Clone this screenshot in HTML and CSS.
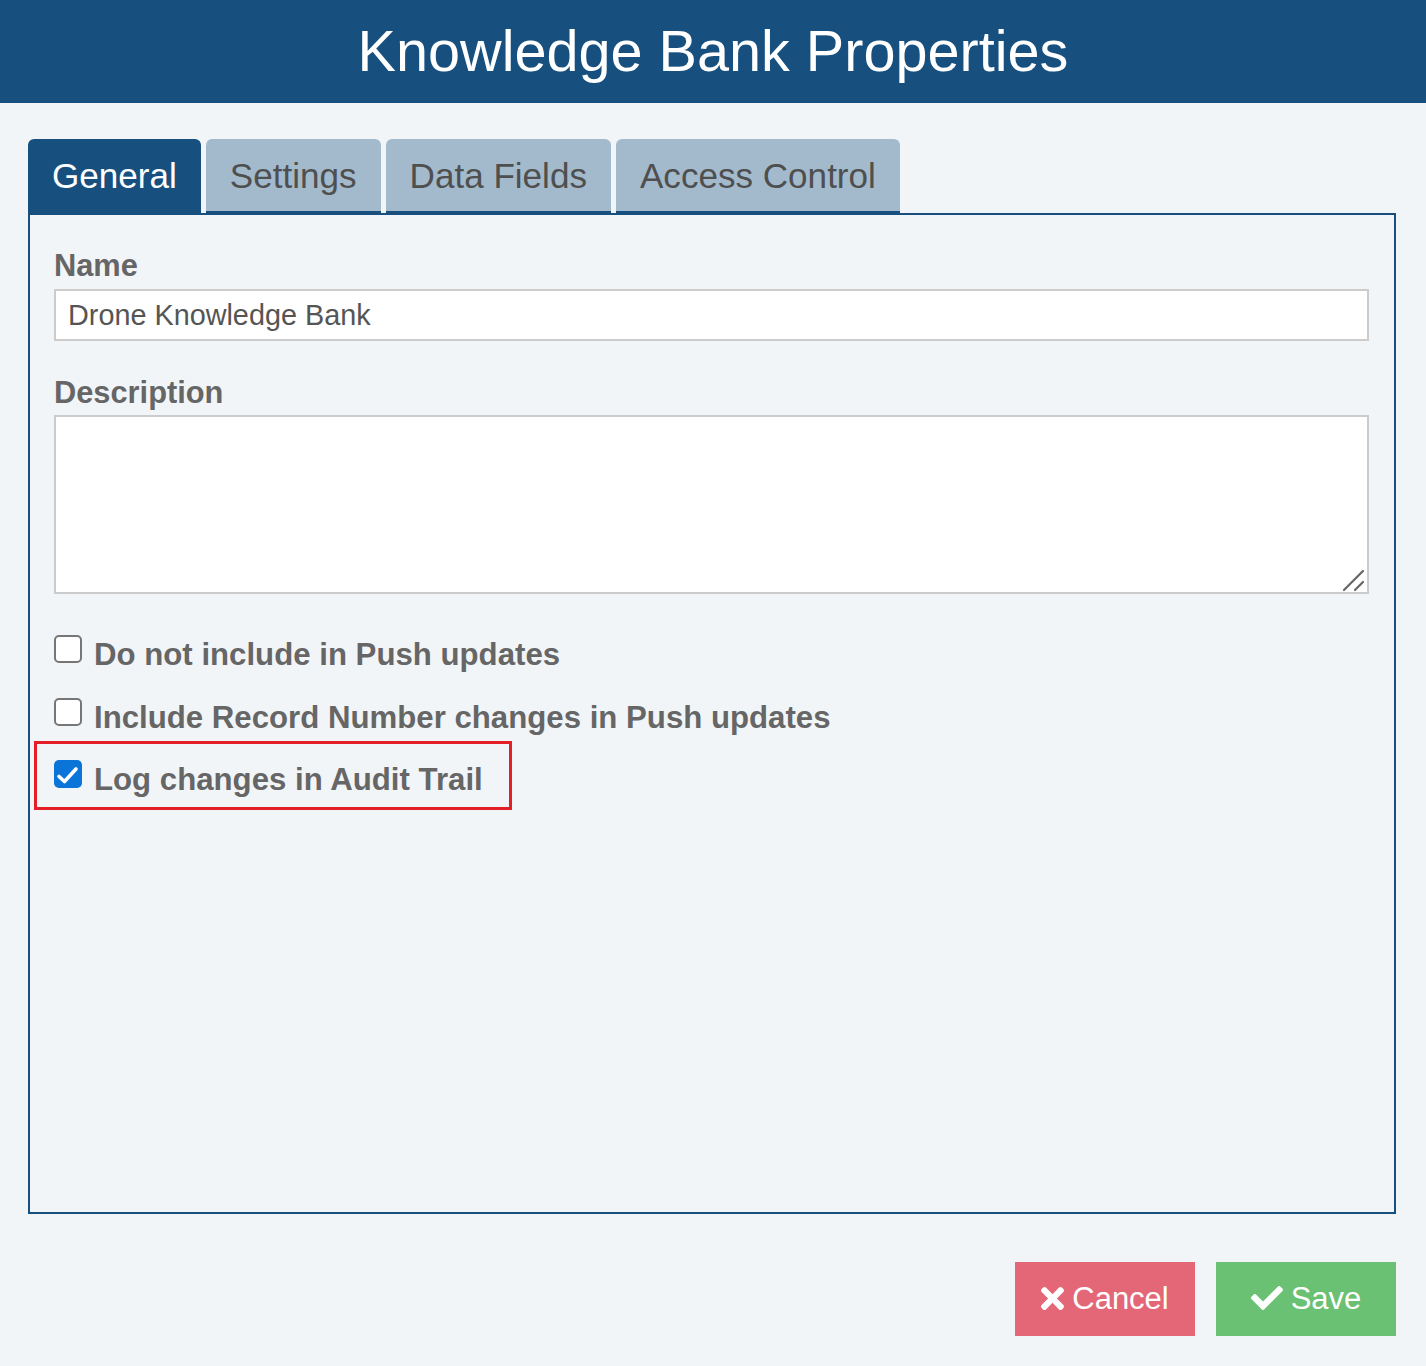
FILE: index.html
```html
<!DOCTYPE html>
<html lang="en">
<head>
<meta charset="utf-8">
<title>Knowledge Bank Properties</title>
<link rel="stylesheet" href="styles.css">
</head>
<body>
<header class="header">
  <h1 class="title">Knowledge Bank Properties</h1>
</header>
<main class="main">
  <nav class="tabs">
    <div class="tab tab-active">General</div>
    <div class="tab">Settings</div>
    <div class="tab">Data Fields</div>
    <div class="tab">Access Control</div>
  </nav>
  <section class="panel">
    <label class="field-label" for="name">Name</label>
    <input class="text-input" id="name" type="text" value="Drone Knowledge Bank">
    <label class="field-label field-label-desc" for="desc">Description</label>
    <div class="area-wrap">
      <textarea class="text-area" id="desc"></textarea>
      <svg class="grip" viewBox="0 0 24 24" aria-hidden="true">
        <path d="M2 22 L21 3 M13 22 L21 14" stroke="#666" stroke-width="2.2" stroke-linecap="round" fill="none"/>
      </svg>
    </div>
    <div class="check-row check-first">
      <span class="box" role="checkbox" aria-checked="false"></span>
      <span class="check-text">Do not include in Push updates</span>
    </div>
    <div class="check-row check-second">
      <span class="box" role="checkbox" aria-checked="false"></span>
      <span class="check-text">Include Record Number changes in Push updates</span>
    </div>
    <div class="highlight">
      <div class="check-row">
        <span class="box box-checked" role="checkbox" aria-checked="true">
          <svg class="tick" viewBox="0 0 28 28" aria-hidden="true"><path d="M5 16.5 L10.5 21.5 L22 9" stroke="#fff" stroke-width="3.6" stroke-linecap="round" stroke-linejoin="round" fill="none"/></svg>
        </span>
        <span class="check-text">Log changes in Audit Trail</span>
      </div>
    </div>
  </section>
  <div class="actions">
    <button class="btn btn-cancel" type="button">
      <svg class="icon-times" viewBox="0 80 352 352" aria-hidden="true"><path fill="#fff" d="M242.72 256l100.07-100.07c12.28-12.28 12.28-32.19 0-44.48l-22.24-22.24c-12.28-12.28-32.19-12.28-44.48 0L176 189.28 75.930 89.21c-12.28-12.28-32.19-12.28-44.48 0L9.21 111.45c-12.28 12.28-12.280 32.19 0 44.48L109.28 256 9.21 356.07c-12.28 12.28-12.28 32.19 0 44.48l22.24 22.24c12.28 12.28 32.2 12.28 44.480 0L176 322.72l100.07 100.07c12.28 12.28 32.2 12.28 44.48 0l22.24-22.24c12.28-12.28 12.28-32.19 0-44.48L242.72 256z"/></svg>
      <span>Cancel</span>
    </button>
    <button class="btn btn-save" type="button">
      <svg class="icon-check" viewBox="0 65 512 382" aria-hidden="true"><path fill="#fff" d="M173.898 439.404l-166.4-166.4c-9.997-9.997-9.997-26.206 0-36.204l36.203-36.204c9.997-9.998 26.207-9.998 36.204 0L192 312.69 432.095 72.596c9.997-9.997 26.207-9.997 36.204 0l36.203 36.204c9.997 9.997 9.997 26.206 0 36.204l-294.4 294.401c-9.998 9.997-26.207 9.997-36.204-.001z"/></svg>
      <span>Save</span>
    </button>
  </div>
</main>
</body>
</html>
```

FILE: styles.css
```css
* {
  box-sizing: border-box;
}

html, body {
  margin: 0;
  padding: 0;
}

body {
  background: #f2f5f8;
  font-family: "Liberation Sans", Arial, sans-serif;
  width: 1426px;
  min-height: 1366px;
}

.header {
  background: #17507f;
  height: 103px;
  display: flex;
  align-items: center;
  justify-content: center;
}

.title {
  margin: 0;
  color: #ffffff;
  font-size: 57.6px;
  font-weight: normal;
  line-height: 103px;
}

.main {
  padding: 36px 30px 0 28px;
}

.tabs {
  display: flex;
  gap: 5px;
  height: 74px;
}

.tab {
  height: 74px;
  padding: 0 24px;
  font-size: 35.1px;
  color: #4f4f4f;
  background: #a3bacd;
  border-radius: 6px 6px 0 0;
  border-bottom: 2px solid #17507f;
  line-height: 74px;
  white-space: nowrap;
}

.tab-active {
  background: #17507f;
  color: #ffffff;
  border-bottom-color: #17507f;
}

.panel {
  width: 1368px;
  height: 1001px;
  border: 2px solid #17507f;
  padding: 33px 25px 0 24px;
  display: flex;
  flex-direction: column;
  align-items: flex-start;
}

.field-label {
  display: block;
  font-size: 30.8px;
  font-weight: bold;
  color: #666666;
  line-height: 36px;
}

.field-label-desc {
  margin-top: 34px;
}

.text-input {
  display: block;
  width: 100%;
  height: 52px;
  margin-top: 5px;
  border: 2px solid #cccccc;
  background: #ffffff;
  padding: 0 12px;
  font-family: "Liberation Sans", Arial, sans-serif;
  font-size: 28.8px;
  color: #555555;
  outline: none;
}

.area-wrap {
  position: relative;
  width: 100%;
  height: 179px;
  margin-top: 4px;
}

.text-area {
  display: block;
  width: 100%;
  height: 179px;
  border: 2px solid #cccccc;
  background: #ffffff;
  resize: none;
  font-family: "Liberation Sans", Arial, sans-serif;
  font-size: 28px;
  outline: none;
}

.grip {
  position: absolute;
  right: 3px;
  bottom: 2px;
  width: 24px;
  height: 24px;
}

.check-row {
  display: flex;
  align-items: flex-start;
  gap: 12px;
  height: 40px;
  white-space: nowrap;
}

.check-first {
  margin-top: 41px;
}

.check-second {
  margin-top: 23px;
}

.box {
  width: 28px;
  height: 28px;
  flex: none;
  border: 2px solid #767676;
  border-radius: 5px;
  background: #ffffff;
  display: block;
}

.box-checked {
  border: none;
  background: #0b74d8;
}

.tick {
  display: block;
  width: 28px;
  height: 28px;
}

.check-text {
  font-size: 31.2px;
  font-weight: bold;
  color: #666666;
  line-height: 40px;
  white-space: nowrap;
}

.highlight {
  margin-top: 3px;
  margin-left: -20px;
  border: 3px solid #e41e26;
  padding: 16px 0 7px 17px;
  width: 478px;
}

.actions {
  display: flex;
  justify-content: flex-end;
  gap: 21px;
  margin-top: 48px;
  width: 1368px;
}

.btn {
  width: 180px;
  height: 74px;
  border: none;
  display: flex;
  align-items: center;
  justify-content: center;
  gap: 8px;
  color: #ffffff;
  font-family: "Liberation Sans", Arial, sans-serif;
  font-size: 31px;
  padding: 0;
}

.btn-cancel {
  background: #e36776;
}

.btn-save {
  background: #6ac073;
}

.icon-times {
  width: 23px;
  height: 23px;
  margin-top: -2px;
}

.icon-check {
  width: 32px;
  height: 24px;
  margin-top: -2px;
}
```
